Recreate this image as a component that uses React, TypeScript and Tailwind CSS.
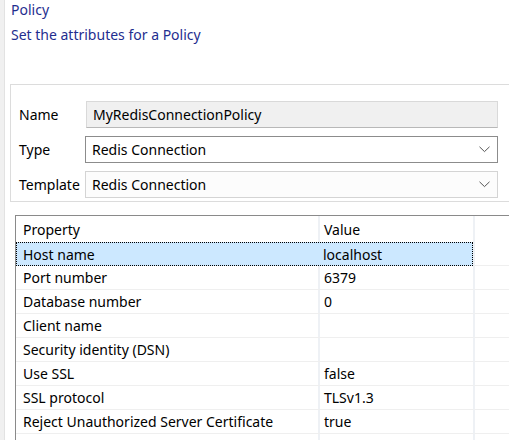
import React from "react";

const font = { fontFamily: '"Segoe UI", "Noto Sans", "Open Sans", sans-serif' };

type Row = { name: string; value: string; selected?: boolean };

const rows: Row[] = [
  { name: "Host name", value: "localhost", selected: true },
  { name: "Port number", value: "6379" },
  { name: "Database number", value: "0" },
  { name: "Client name", value: "" },
  { name: "Security identity (DSN)", value: "" },
  { name: "Use SSL", value: "false" },
  { name: "SSL protocol", value: "TLSv1.3" },
  { name: "Reject Unauthorized Server Certificate", value: "true" },
  { name: "", value: "" },
];

function Chevron() {
  return (
    <svg width="11" height="7" viewBox="0 0 11 7" className="shrink-0">
      <path d="M0.5 0.8 L5.5 5.6 L10.5 0.8" fill="none" stroke="#555" strokeWidth="1" />
    </svg>
  );
}

function Select({ value, strong }: { value: string; strong?: boolean }) {
  return (
    <div
      className={
        "flex h-[27px] w-[413px] items-center justify-between pl-[6px] pr-[7px] " +
        (strong ? "border border-[#8c8c8c] bg-white" : "border border-[#d4d4d4] bg-[#fcfcfc]")
      }
    >
      <span className="text-[14px] leading-none text-black">{value}</span>
      <Chevron />
    </div>
  );
}

export default function App() {
  return (
    <div className="flex h-[440px] w-[509px] overflow-hidden bg-white" style={font}>
      <div className="h-full w-[5px] shrink-0 border-r border-[#e2e2e2] bg-[#f0f0f0]" />
      <div className="flex min-w-0 flex-1 flex-col">
        <div className="flex h-[84px] shrink-0 flex-col pl-[6px] pt-[1px] text-[14px] text-[#1f2e8f]">
          <div className="h-[18px] leading-[18px]">Policy</div>
          <div className="mt-[7px] h-[18px] leading-[18px]">Set the attributes for a Policy</div>
        </div>

        <div className="ml-[5px] h-[118px] w-[520px] shrink-0 border border-r-0 border-[#dcdcdc] pl-[8px] pt-[16px]">
          <div className="grid grid-cols-[67px_auto] items-center gap-y-[8px] text-[14px] text-black">
            <div>Name</div>
            <div className="flex h-[27px] w-[412px] items-center border border-[#d9d9d9] border-b-[#b8b8b8] bg-[#f0f0f0] pl-[6px]">
              <span className="leading-none">MyRedisConnectionPolicy</span>
            </div>
            <div>Type</div>
            <div className="-ml-[1px]">
              <Select value="Redis Connection" strong />
            </div>
            <div className="-mr-[4px]">Template</div>
            <div className="-ml-[1px]">
              <Select value="Redis Connection" />
            </div>
          </div>
        </div>

        <div className="ml-[10px] mt-[13px] w-[520px] flex-1 border-l border-t border-[#8a8a8a] text-[14px] text-black">
          <div className="grid h-[26px] grid-cols-[302px_155px_auto]">
            <div className="flex items-center pl-[7px] pt-[1px]">Property</div>
            <div className="flex items-center border-l-2 border-[#eef1f5] pl-[4px] pt-[1px]">Value</div>
            <div className="border-l-2 border-[#eef1f5]" />
          </div>
          {rows.map((r, i) => (
            <div key={i} className="grid h-[24px] grid-cols-[457px_auto]">
              {r.selected ? (
                <div className="grid grid-cols-[302px_155px] border border-dotted border-black bg-[#cce8ff]">
                  <div className="flex items-center pl-[6px]">{r.name}</div>
                  <div className="flex items-center pl-[4px]">{r.value}</div>
                </div>
              ) : (
                <div className="grid grid-cols-[302px_155px] border-b border-[#efefef]">
                  <div className="flex items-center pl-[7px]">{r.name}</div>
                  <div className="flex items-center border-l-2 border-[#eef1f5] pl-[4px]">{r.value}</div>
                </div>
              )}
              <div className="border-b border-l-2 border-[#eef1f5] border-b-[#efefef]" />
            </div>
          ))}
        </div>
      </div>
    </div>
  );
}
